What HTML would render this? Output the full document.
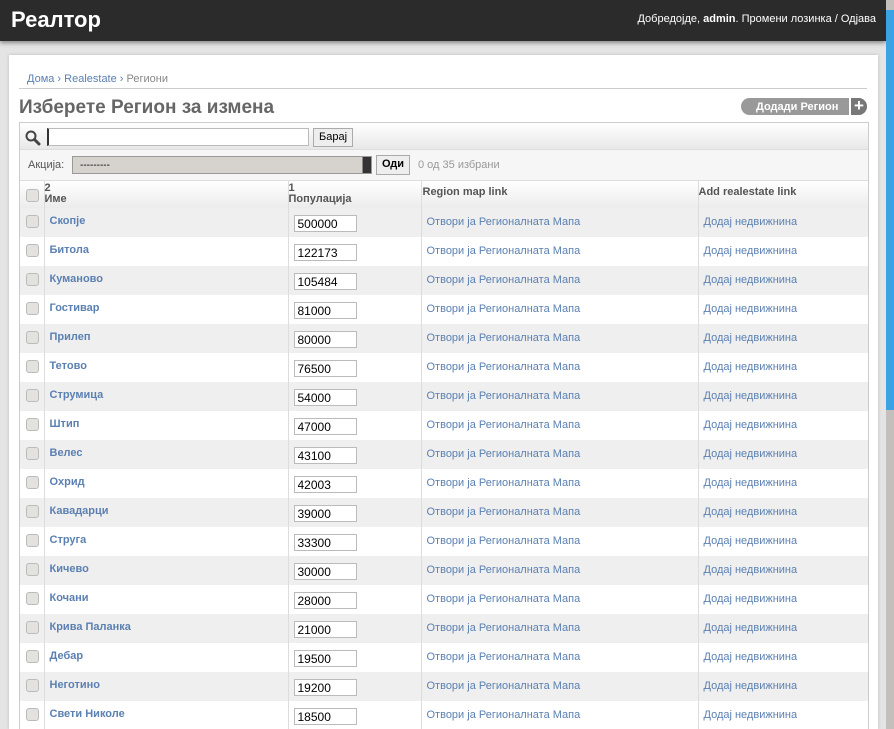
<!DOCTYPE html>
<html style="overflow:hidden"><head><meta charset="utf-8"><style>
*{box-sizing:border-box;margin:0;padding:0}
html,body{width:894px;height:729px;overflow:hidden}
body{background:#e4e4e4;font-family:"Liberation Sans",Arial,sans-serif;font-size:11px;color:#333;position:relative}
#hdr{position:absolute;left:0;top:0;width:886px;height:41px;background:#2b2b2b;box-shadow:0 2px 4px #888}
#hdr .t{position:absolute;left:11px;top:7px;color:#fff;font-size:22px;font-weight:bold}
#hdr .u{position:absolute;right:10px;top:13px;color:#fff;font-size:11px}
#sb{position:absolute;left:886px;top:0;width:8px;height:729px;background:#c4bfbb}
#sb div{position:absolute;top:10px;left:0;width:8px;height:400px;background:#3aa3e3}
#box{position:absolute;left:9px;top:55px;width:869px;height:674px;background:#fff;box-shadow:0 0 3px #bbb}
.bc{position:absolute;left:27px;top:73px;color:#5b80b2;font-size:11px}
.bc span{color:#888}
.line{position:absolute;left:19px;top:88px;width:848px;height:1px;background:#ccc}
h1{position:absolute;left:19px;top:97px;font-size:19px;color:#666;font-weight:bold}
.add{position:absolute;left:741px;top:98px;width:126px;height:17px;background:#999;border-radius:9px;color:#fff;font-weight:bold;font-size:11px;padding:3px 0 0 15px}
.add b{position:absolute;right:0;top:0;width:18px;height:17px;background:#777;border-radius:0 9px 9px 0;border-left:2px solid #fff;font-size:17px;line-height:15px;text-align:center}
#tb{position:absolute;left:19px;top:122px;width:850px;height:620px;border:1px solid #ccc;border-bottom:none}
.srch{height:27px;background:linear-gradient(#fff,#e8e8e8);border-bottom:1px solid #ddd;position:relative}
.act{height:31px;background:#f6f6f6;border-bottom:1px solid #ddd;position:relative}
.inp{position:absolute;background:#fff;border:1px solid #bbb}
.btn{position:absolute;background:#eee;border:1px solid #aaa;font-size:11px;color:#000;padding:2px 5px}
table{border-collapse:collapse;width:848px}
th{height:27px;background:linear-gradient(#fff,#ececec);text-align:left;vertical-align:top;font-weight:bold;color:#555;font-size:11px;border-left:1px solid #ddd;line-height:11px;padding-top:2px}
td{height:29px;border-left:1px solid #ddd;vertical-align:middle;font-size:11px;background:#fff}
tr.g td{background:#efefef}
th:first-child,td:first-child{border-left:none}
.cb{display:inline-block;width:13px;height:13px;border:1px solid #bbb;border-radius:3px;background:#e4e2df;margin-left:6px}
.n{color:#5b80b2;font-weight:bold;padding-left:5px;padding-bottom:3px}
.p input{width:63px;height:17px;border:1px solid #bbb;font:12px "Liberation Sans",sans-serif;padding-left:3px;margin-left:5px;margin-top:2px}
.l{color:#5b80b2;padding-left:5px;padding-bottom:2px}
</style></head><body>
<div id="hdr"><div class="t">Реалтор</div><div class="u">Добредојде, <b>admin</b>. Промени лозинка / Одјава</div></div>
<div id="sb"><div></div></div>
<div id="box"></div>
<div class="bc">Дома › Realestate › <span>Региони</span></div>
<div class="line"></div>
<h1>Изберете Регион за измена</h1>
<div class="add">Додади Регион<b>+</b></div>
<div id="tb">
<div class="srch">
<svg style="position:absolute;left:5px;top:7px" width="16" height="16" viewBox="0 0 16 16"><circle cx="6" cy="6" r="4.5" fill="none" stroke="#444" stroke-width="2"/><path d="M9.5 9.5L14 14" stroke="#444" stroke-width="3" stroke-linecap="round"/></svg>
<div class="inp" style="left:27px;top:5px;width:262px;height:18px;border-left:2px solid #333"></div>
<div class="btn" style="left:293px;top:5px;height:19px">Барај</div>
</div>
<div class="act" style="height:31px">
<span style="position:absolute;left:8px;top:9px;color:#555">Акција:</span>
<div class="inp" style="left:52px;top:6px;width:300px;height:18px;background:#d6d3cf;border-color:#999;padding:3px 0 0 7px;font-size:10px;color:#000">---------<span style="position:absolute;right:0;top:0;width:9px;height:16px;background:#333;border-left:1px solid #888"></span></div>
<div class="btn" style="left:356px;top:5px;height:20px;font-weight:bold">Оди</div>
<span style="position:absolute;left:398px;top:9px;color:#999">0 од 35 избрани</span>
</div>
<table>
<tr><th style="width:24px;height:26px"><span class="cb" style="margin-top:6px"></span></th><th style="width:244px">2<br>Име</th><th style="width:133px">1<br>Популација</th><th style="width:277px;vertical-align:middle;padding:0 0 4px 1px">Region map link</th><th style="vertical-align:middle;padding:0 0 4px 0">Add realestate link</th></tr>
</table>
<table>
<colgroup><col style="width:24px"><col style="width:244px"><col style="width:133px"><col style="width:277px"><col></colgroup>
<tr class="g"><td><span class="cb"></span></td><td class="n">Скопје</td><td class="p"><input value="500000"></td><td class="l">Отвори ја Регионалната Мапа</td><td class="l">Додај недвижнина</td></tr>
<tr><td><span class="cb"></span></td><td class="n">Битола</td><td class="p"><input value="122173"></td><td class="l">Отвори ја Регионалната Мапа</td><td class="l">Додај недвижнина</td></tr>
<tr class="g"><td><span class="cb"></span></td><td class="n">Куманово</td><td class="p"><input value="105484"></td><td class="l">Отвори ја Регионалната Мапа</td><td class="l">Додај недвижнина</td></tr>
<tr><td><span class="cb"></span></td><td class="n">Гостивар</td><td class="p"><input value="81000"></td><td class="l">Отвори ја Регионалната Мапа</td><td class="l">Додај недвижнина</td></tr>
<tr class="g"><td><span class="cb"></span></td><td class="n">Прилеп</td><td class="p"><input value="80000"></td><td class="l">Отвори ја Регионалната Мапа</td><td class="l">Додај недвижнина</td></tr>
<tr><td><span class="cb"></span></td><td class="n">Тетово</td><td class="p"><input value="76500"></td><td class="l">Отвори ја Регионалната Мапа</td><td class="l">Додај недвижнина</td></tr>
<tr class="g"><td><span class="cb"></span></td><td class="n">Струмица</td><td class="p"><input value="54000"></td><td class="l">Отвори ја Регионалната Мапа</td><td class="l">Додај недвижнина</td></tr>
<tr><td><span class="cb"></span></td><td class="n">Штип</td><td class="p"><input value="47000"></td><td class="l">Отвори ја Регионалната Мапа</td><td class="l">Додај недвижнина</td></tr>
<tr class="g"><td><span class="cb"></span></td><td class="n">Велес</td><td class="p"><input value="43100"></td><td class="l">Отвори ја Регионалната Мапа</td><td class="l">Додај недвижнина</td></tr>
<tr><td><span class="cb"></span></td><td class="n">Охрид</td><td class="p"><input value="42003"></td><td class="l">Отвори ја Регионалната Мапа</td><td class="l">Додај недвижнина</td></tr>
<tr class="g"><td><span class="cb"></span></td><td class="n">Кавадарци</td><td class="p"><input value="39000"></td><td class="l">Отвори ја Регионалната Мапа</td><td class="l">Додај недвижнина</td></tr>
<tr><td><span class="cb"></span></td><td class="n">Струга</td><td class="p"><input value="33300"></td><td class="l">Отвори ја Регионалната Мапа</td><td class="l">Додај недвижнина</td></tr>
<tr class="g"><td><span class="cb"></span></td><td class="n">Кичево</td><td class="p"><input value="30000"></td><td class="l">Отвори ја Регионалната Мапа</td><td class="l">Додај недвижнина</td></tr>
<tr><td><span class="cb"></span></td><td class="n">Кочани</td><td class="p"><input value="28000"></td><td class="l">Отвори ја Регионалната Мапа</td><td class="l">Додај недвижнина</td></tr>
<tr class="g"><td><span class="cb"></span></td><td class="n">Крива Паланка</td><td class="p"><input value="21000"></td><td class="l">Отвори ја Регионалната Мапа</td><td class="l">Додај недвижнина</td></tr>
<tr><td><span class="cb"></span></td><td class="n">Дебар</td><td class="p"><input value="19500"></td><td class="l">Отвори ја Регионалната Мапа</td><td class="l">Додај недвижнина</td></tr>
<tr class="g"><td><span class="cb"></span></td><td class="n">Неготино</td><td class="p"><input value="19200"></td><td class="l">Отвори ја Регионалната Мапа</td><td class="l">Додај недвижнина</td></tr>
<tr><td><span class="cb"></span></td><td class="n">Свети Николе</td><td class="p"><input value="18500"></td><td class="l">Отвори ја Регионалната Мапа</td><td class="l">Додај недвижнина</td></tr>
</table>
</div>
</body></html>
